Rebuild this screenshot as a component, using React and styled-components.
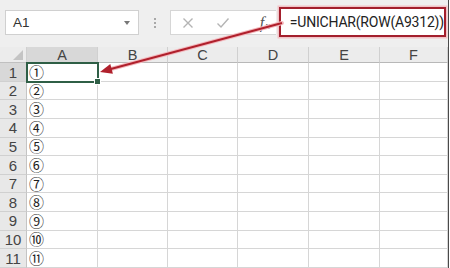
import React from 'react'
import styled, { createGlobalStyle } from 'styled-components'

const GlobalStyle = createGlobalStyle`
  html, body {
    margin: 0;
    padding: 0;
    background: #ffffff;
  }
  body {
    font-family: "Liberation Sans", Arial, sans-serif;
  }
`

const columns = ['A', 'B', 'C', 'D', 'E', 'F']
const circled = ['①', '②', '③', '④', '⑤', '⑥', '⑦', '⑧', '⑨', '⑩', '⑪']

const App = () => {
  return (
    <Page>
      <GlobalStyle />
      <Toolbar>
        <NameBox>
          <span>A1</span>
          <Caret />
        </NameBox>
        <Grip>
          <i /><i /><i />
        </Grip>
        <FxButtons>
          <svg width="12" height="12" viewBox="0 0 12 12">
            <path d="M1.5 1.5 L10.5 10.5 M10.5 1.5 L1.5 10.5" stroke="#b4b4b4" strokeWidth="1.4" fill="none" />
          </svg>
          <svg width="14" height="12" viewBox="0 0 14 12">
            <path d="M1.5 6.5 L5 10 L12.5 1.5" stroke="#b4b4b4" strokeWidth="1.4" fill="none" />
          </svg>
          <Fx>
            <span>f</span>
            <small>x</small>
          </Fx>
        </FxButtons>
        <FormulaInput>=UNICHAR(ROW(A9312))</FormulaInput>
      </Toolbar>

      <Sheet>
        <Corner>
          <CornerMark />
        </Corner>
        {columns.map(c => (
          <ColHead key={c} active={c === 'A'}>{c}</ColHead>
        ))}
        {circled.map((ch, r) => (
          <React.Fragment key={r}>
            <RowHead active={r === 0}>{r + 1}</RowHead>
            {columns.map(c => (
              <Cell key={c} selected={r === 0 && c === 'A'}>
                {c === 'A' ? ch : ''}
                {r === 0 && c === 'A' && <FillHandle />}
              </Cell>
            ))}
          </React.Fragment>
        ))}
      </Sheet>

      <Overlay width="450" height="268" viewBox="0 0 450 268">
        <line x1="282" y1="23" x2="108" y2="69.8" stroke="#f3b9be" strokeWidth="4" strokeLinecap="round" />
        <line x1="282" y1="23" x2="108" y2="69.8" stroke="#b0202c" strokeWidth="2" />
        <polygon points="100,72 110.3,64 112.9,73.7" fill="#b0202c" />
      </Overlay>
    </Page>
  )
}

export default App

const Page = styled.div`
  position: relative;
  width: 448px;
  height: 268px;
  overflow: hidden;
  border-right: 1px solid #4a4a4a;
  background: #ffffff;
`

const Toolbar = styled.div`
  height: 47px;
  display: flex;
  align-items: center;
  padding: 0 2px 2px 5px;
  box-sizing: border-box;
  background: #efefef;
`

const NameBox = styled.div`
  width: 137px;
  height: 25px;
  box-sizing: border-box;
  background: #ffffff;
  border: 1px solid #d0d0d0;
  display: flex;
  align-items: center;
  justify-content: space-between;
  padding: 0 8px 0 7px;
  font-size: 13.5px;
  color: #333;
`

const Caret = styled.div`
  width: 0;
  height: 0;
  border-left: 3.5px solid transparent;
  border-right: 3.5px solid transparent;
  border-top: 4px solid #777;
`

const Grip = styled.div`
  width: 31px;
  display: flex;
  flex-direction: column;
  align-items: center;
  gap: 2px;
  i {
    width: 2px;
    height: 2px;
    background: #a8a8a8;
  }
`

const FxButtons = styled.div`
  width: 108px;
  height: 25px;
  box-sizing: border-box;
  background: #ffffff;
  border: 1px solid #d6d6d6;
  border-right: none;
  display: flex;
  align-items: center;
  padding-left: 11px;
  gap: 22px;
`

const Fx = styled.div`
  display: flex;
  align-items: baseline;
  margin-left: 8px;
  font-family: "Liberation Serif", serif;
  font-style: italic;
  color: #555;
  span {
    font-size: 16px;
  }
  small {
    font-size: 11px;
    margin-left: 1px;
    position: relative;
    top: 1px;
  }
`

const FormulaInput = styled.div`
  flex: 1;
  height: 30px;
  margin-left: 3px;
  margin-bottom: 2px;
  box-sizing: border-box;
  background: #ffffff;
  border: 2.5px solid #a31f2d;
  box-shadow: 0 0 0 1.5px #f1c4c8;
  display: flex;
  align-items: center;
  padding-left: 9px;
  font-family: "Roboto", "Liberation Sans", sans-serif;
  font-size: 14px;
  letter-spacing: -0.2px;
  color: #222;
`

const Sheet = styled.div`
  display: grid;
  grid-template-columns: 27px 71px 70px 70px 71px 71px 68px;
  grid-template-rows: 16.3px repeat(11, 18.6px);
  font-size: 15px;
`

const Corner = styled.div`
  position: relative;
  background: #ececec;
  border-right: 1px solid #d0d0d0;
  border-bottom: 1px solid #c0c0c0;
`

const CornerMark = styled.div`
  position: absolute;
  right: 3px;
  bottom: 2px;
  width: 0;
  height: 0;
  border-left: 10px solid transparent;
  border-bottom: 10px solid #c4c4c4;
`

const ColHead = styled.div`
  background: ${p => (p.active ? '#d8d8d8' : '#ececec')};
  border-right: 1px solid #d0d0d0;
  border-bottom: 1px solid #b8b8b8;
  display: flex;
  align-items: flex-end;
  justify-content: center;
  font-size: 14.5px;
  color: #444;
  line-height: 1;
`

const RowHead = styled.div`
  background: ${p => (p.active ? '#d8d8d8' : '#e8e8e8')};
  border-right: 1px solid #c4c4c4;
  border-bottom: 1px solid #d0d0d0;
  display: flex;
  align-items: center;
  justify-content: center;
  color: #444;
  line-height: 1;
`

const Cell = styled.div`
  position: relative;
  box-sizing: border-box;
  border-right: 1px solid #d6d6d6;
  border-bottom: 1px solid #d6d6d6;
  display: flex;
  align-items: center;
  padding-left: 2px;
  font-family: "Noto Sans CJK SC", sans-serif;
  font-size: 15px;
  color: #1e1e1e;
  line-height: 16px;
  ${p => p.selected && `
    outline: 2px solid #2f5f46;
    outline-offset: -1px;
    z-index: 1;
  `}
`

const FillHandle = styled.div`
  position: absolute;
  right: -4px;
  bottom: -4px;
  width: 5px;
  height: 5px;
  background: #2f5f46;
  border: 1px solid #ffffff;
`

const Overlay = styled.svg`
  position: absolute;
  left: 0;
  top: 0;
  pointer-events: none;
  z-index: 2;
`
